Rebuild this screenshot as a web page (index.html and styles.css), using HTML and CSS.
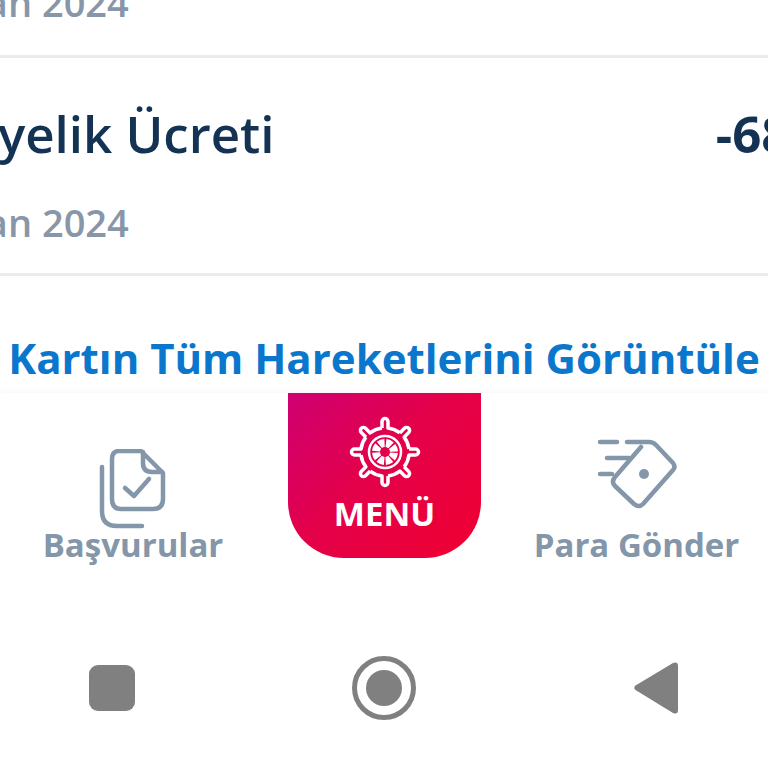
FILE: index.html
```html
<!DOCTYPE html>
<html lang="tr">
<head>
<meta charset="utf-8">
<title>Kart Hareketleri</title>
<link rel="stylesheet" href="styles.css">
</head>
<body>
<main class="screen">
  <section class="list">
    <div class="row row-first">
      <div class="date">Nisan 2024</div>
    </div>
    <div class="row">
      <div class="row-main">
        <div class="title">Üyelik Ücreti</div>
        <div class="amount">-68,00 TL</div>
      </div>
      <div class="date">Nisan 2024</div>
    </div>
  </section>
  <a class="all-link">Kartın Tüm Hareketlerini Görüntüle</a>
  <nav class="tabbar">
    <div class="tab tab-apply">
      <svg class="tab-icon" width="68" height="80" viewBox="0 0 68 80" fill="none" stroke="#8496a9" stroke-width="4.5" stroke-linecap="round" stroke-linejoin="round">
        <path d="M3 18V62Q3 77 18 77H43"/>
        <path d="M20 2H42L64 24V50Q64 60 54 60H22Q13 60 13 50V10Q13 2 20 2Z"/>
        <path d="M44 3V14Q44 23 53 23H63"/>
        <path d="M26 39L35 47L50 30"/>
      </svg>
      <span class="tab-label">Başvurular</span>
    </div>
    <div class="menu">
      <svg width="72" height="72" viewBox="0 0 72 72" fill="none" stroke="#fff" class="wheel">
        <defs>
          <path id="tooth" d="M33 12V5.500A3 3 0 0 1 39 5.500V12A24.200 24.200 0 0 1 50.850 16.910" stroke-width="3.500" stroke-linejoin="round"/>
        </defs>
        <use href="#tooth"/>
        <use href="#tooth" transform="rotate(45 36 36)"/>
        <use href="#tooth" transform="rotate(90 36 36)"/>
        <use href="#tooth" transform="rotate(135 36 36)"/>
        <use href="#tooth" transform="rotate(180 36 36)"/>
        <use href="#tooth" transform="rotate(225 36 36)"/>
        <use href="#tooth" transform="rotate(270 36 36)"/>
        <use href="#tooth" transform="rotate(315 36 36)"/>
        <circle cx="36" cy="36" r="16" stroke-width="2.500"/>
        <circle cx="36" cy="36" r="9" stroke-width="8" stroke-dasharray="5.570 1.500" stroke-dashoffset="-0.750"/>
      </svg>
      <span class="menu-label">MENÜ</span>
    </div>
    <div class="tab tab-send">
      <svg class="tab-icon" width="80" height="72" viewBox="0 0 80 72" fill="none" stroke="#8496a9" stroke-width="4.500" stroke-linecap="round" stroke-linejoin="round">
        <path d="M3 3H20M30 3H52Q56 3 59 6L76 24Q79 28 76 31L46 65Q42 69 37 65L18 47Q14 43 18 38L44 8"/>
        <path d="M10 19H32M3 35H15"/>
        <circle cx="47" cy="35" r="5" fill="#8496a9" stroke="none"/>
      </svg>
      <span class="tab-label">Para Gönder</span>
    </div>
  </nav>
  <div class="system-nav">
    <span class="sys-square"></span>
    <span class="sys-home"><span class="sys-dot"></span></span>
    <svg class="sys-back" width="44" height="52" viewBox="0 0 44 52"><path d="M1.500 23.500L39 1Q44 -1 44 4V48Q44 53 39 51L1.500 28Q-1 26 1.500 23.500Z" fill="#808080"/></svg>
  </div>
</main>
</body>
</html>
```
FILE: styles.css
```css
* { box-sizing: border-box; }
html, body { margin: 0; padding: 0; }
body { width: 768px; height: 768px; overflow: hidden; background: #fff; font-family: "Open Sans", "Noto Sans", sans-serif; }
.screen { width: 768px; height: 768px; display: flex; flex-direction: column; overflow: hidden; }
.list { margin: -28px -167px 0 -73px; flex: none; }
.row { height: 218px; border-bottom: 3px solid #e9ebee; padding-top: 44px; }
.row-first { height: 86px; padding-top: 5px; }
.row-main { display: flex; justify-content: space-between; align-items: baseline; }
.title { font-size: 51px; line-height: 62px; font-weight: 600; color: #143354; padding-left: 33px; }
.amount { font-size: 51px; line-height: 62px; font-weight: 700; color: #143354; }
.date { font-size: 38px; line-height: 50px; font-weight: 600; color: #8796a8; margin-top: 33px; }
.row-first .date { margin-top: 0; }
.all-link { display: block; flex: none; height: 117px; padding-top: 56px; text-align: center; font-size: 42px; line-height: 52px; font-weight: 700; color: #0a77cd; white-space: nowrap; }
.tabbar { flex: none; height: 165px; display: grid; grid-template-columns: 288px 193px 1fr; background: #fff; box-shadow: 0 -2px 6px rgba(0, 0, 0, 0.03); }
.tab { display: flex; flex-direction: column; align-items: center; padding-top: 56px; }
.tab-apply { padding-right: 22px; }
.tab-send { padding-top: 46px; padding-left: 24px; }
.tab-icon { flex: none; }
.tab-label { font-size: 33px; line-height: 42px; font-weight: 700; color: #8496a9; white-space: nowrap; margin-top: -5px; }
.tab-send .tab-label { margin-top: 13px; }
.menu { height: 165px; display: flex; flex-direction: column; align-items: center; padding-top: 23px; background: linear-gradient(135deg, #cf0072 0%, #e4004a 45%, #f00030 100%); border-radius: 0 0 56px 56px; }
.wheel { flex: none; }
.menu-label { font-size: 33px; line-height: 44px; font-weight: 700; color: #fff; margin-top: 4px; }
.system-nav { flex: 1; display: grid; grid-template-columns: 224px 320px 224px; align-items: center; justify-items: center; padding-top: 75px; padding-bottom: 26px; }
.sys-square { width: 46px; height: 46px; border-radius: 9px; background: #808080; }
.sys-home { width: 64px; height: 64px; border-radius: 50%; border: 5px solid #808080; display: flex; align-items: center; justify-content: center; }
.sys-dot { width: 36px; height: 36px; border-radius: 50%; background: #808080; }
.sys-back { display: block; }
```
